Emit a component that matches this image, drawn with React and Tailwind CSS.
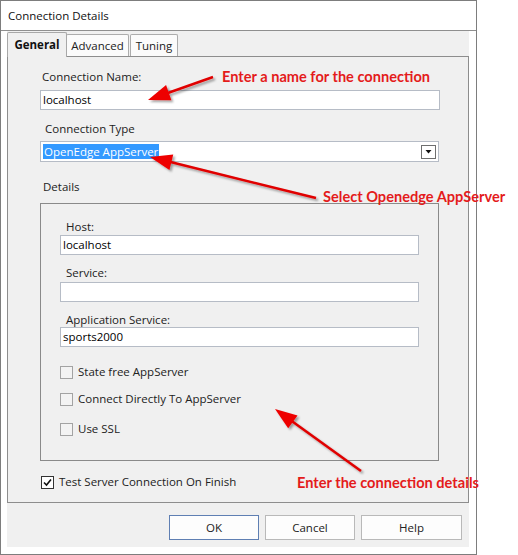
import React from "react";

const Input = ({ value, className = "" }) => (
  <div className={`h-[20px] border border-[#b6bcc6] bg-white pl-[2px] flex items-center text-black ${className}`}>
    {value}
  </div>
);

const Check = ({ label, checked, className = "" }) => (
  <div className={`flex items-center h-[16px] ${className}`}>
    {checked ? (
      <span className="w-[13px] h-[13px] border border-[#333] bg-white flex items-center justify-center">
        <svg width="11" height="11" viewBox="0 0 11 11">
          <path d="M2 5.5 L4.5 8 L9 2.5" fill="none" stroke="#111" strokeWidth="1.6" />
        </svg>
      </span>
    ) : (
      <span className="w-[13px] h-[13px] border border-[#a3a3a3] bg-[#f3f3f3]" />
    )}
    <span className="ml-[5px] text-[#222]">{label}</span>
  </div>
);

function Arrow({ tail, tip, len = 21, half = 7 }) {
  const dx = tip[0] - tail[0];
  const dy = tip[1] - tail[1];
  const d = Math.hypot(dx, dy);
  const ux = dx / d;
  const uy = dy / d;
  const bx = tip[0] - ux * len;
  const by = tip[1] - uy * len;
  const px = -uy * half;
  const py = ux * half;
  const head = `${tip[0]},${tip[1]} ${bx + px},${by + py} ${bx - px},${by - py}`;
  return (
    <g filter="url(#shadow)">
      <line x1={tail[0]} y1={tail[1]} x2={bx + ux * 4} y2={by + uy * 4} stroke="#e00000" strokeWidth="2.5" />
      <polygon points={head} fill="#ee0000" />
    </g>
  );
}

export default function App() {
  return (
    <div className="relative w-[518px] h-[555px] bg-white font-['Open_Sans',sans-serif] text-[11.5px] text-black">
      <div className="w-[477px] h-[555px] border border-[#7d7d7d] flex flex-col">
        <div className="h-[30px] shrink-0 border-b border-[#8f8f8f] pl-[7px] flex items-center text-[#111]">
          Connection Details
        </div>
        <div className="pl-[6px] pr-[7px]">
          <div className="bg-[#f0f0f0] h-[516px] flex flex-col">
            {/* tab strip */}
            <div className="h-[25px] shrink-0 flex items-end">
              <div className="relative z-10 -mb-px h-[25px] w-[60px] border-t border-l border-r border-[#a8a8a8] rounded-t-[2px] bg-[#f0f0f0] flex items-center justify-center font-bold text-[#111]">
                General
              </div>
              <div className="h-[22px] w-[63px] -ml-px border-t border-l border-r border-[#acacac] rounded-t-[2px] bg-[#fbfbfb] flex items-center justify-center text-[#222]">
                Advanced
              </div>
              <div className="h-[22px] w-[48px] ml-[1px] border-t border-l border-r border-[#acacac] rounded-t-[2px] bg-[#fbfbfb] flex items-center justify-center text-[#222]">
                Tuning
              </div>
            </div>
            {/* tab page */}
            <div className="h-[447px] shrink-0 border border-[#8d8d8d] pl-[32px] flex flex-col">
              <div className="mt-[12px] ml-[2px] leading-[16px] text-[#222]">Connection Name:</div>
              <Input value="localhost" className="mt-[5px] w-[400px]" />
              <div className="mt-[11px] ml-[5px] leading-[16px] text-[#222]">Connection Type</div>
              <div className="mt-[4px] h-[21px] w-[399px] border border-[#b6bcc6] bg-white flex items-center pl-[2px] pr-[2px]">
                <span className="h-[15px] bg-[#3399ff] text-white px-[1px] flex items-center">OpenEdge AppServer</span>
                <span className="ml-auto w-[15px] h-[14px] border border-[#6e6e6e] bg-white flex items-center justify-center">
                  <svg width="7" height="4" viewBox="0 0 7 4">
                    <path d="M0.5 0 L6.5 0 L3.5 3.5 Z" fill="#111" />
                  </svg>
                </span>
              </div>
              <div className="mt-[17px] ml-[3px] leading-[16px] text-[#222]">Details</div>
              {/* group box */}
              <div className="mt-[8px] w-[399px] h-[258px] shrink-0 border border-[#8a8a8a] pl-[19px] flex flex-col">
                <div className="mt-[15px] ml-[6px] leading-[16px] text-[#222]">Host:</div>
                <Input value="localhost" className="w-[359px]" />
                <div className="mt-[10px] ml-[6px] leading-[16px] text-[#222]">Service:</div>
                <Input value="" className="mt-[1px] w-[359px]" />
                <div className="mt-[10px] ml-[6px] leading-[16px] text-[#222]">Application Service:</div>
                <Input value="sports2000" className="-mt-px w-[359px]" />
                <Check label="State free AppServer" className="mt-[17px]" />
                <Check label="Connect Directly To AppServer" className="mt-[11px]" />
                <Check label="Use SSL" className="mt-[14px]" />
              </div>
              <Check label="Test Server Connection On Finish" checked className="mt-[13px] ml-[1px]" />
            </div>
            {/* buttons */}
            <div className="flex justify-end gap-[6px] pt-[12px] pr-[7px]">
              <button className="w-[90px] h-[25px] border border-[#5f7fb3] bg-[#fdfdfd] text-[#222]">OK</button>
              <button className="w-[90px] h-[25px] border border-[#b9b9b9] bg-[#fdfdfd] text-[#222]">Cancel</button>
              <button className="w-[101px] h-[25px] border border-[#b9b9b9] bg-[#fdfdfd] text-[#222]">Help</button>
            </div>
          </div>
        </div>
      </div>

      {/* annotations */}
      <svg className="absolute inset-0 pointer-events-none" width="518" height="555">
        <defs>
          <filter id="shadow" x="-20%" y="-20%" width="140%" height="140%">
            <feDropShadow dx="2" dy="2" stdDeviation="1.2" floodColor="#000" floodOpacity="0.35" />
          </filter>
        </defs>
        <Arrow tail={[213, 77]} tip={[148, 100]} len={22} half={8} />
        <Arrow tail={[316, 198]} tip={[150, 157]} len={22} half={8} />
        <Arrow tail={[361, 471]} tip={[275, 409]} len={22} half={8} />
      </svg>
      <div className="absolute left-[222px] top-[68px] leading-[18px] font-['Lato',sans-serif] font-bold text-[14.6px] text-[#e41b1b]">
        Enter a name for the connection
      </div>
      <div className="absolute left-[323px] top-[188px] leading-[18px] font-['Lato',sans-serif] font-bold text-[14.6px] text-[#e41b1b]">
        Select Openedge AppServer
      </div>
      <div className="absolute left-[297px] top-[474px] leading-[18px] font-['Lato',sans-serif] font-bold text-[14.6px] text-[#e41b1b]">
        Enter the connection details
      </div>
    </div>
  );
}
